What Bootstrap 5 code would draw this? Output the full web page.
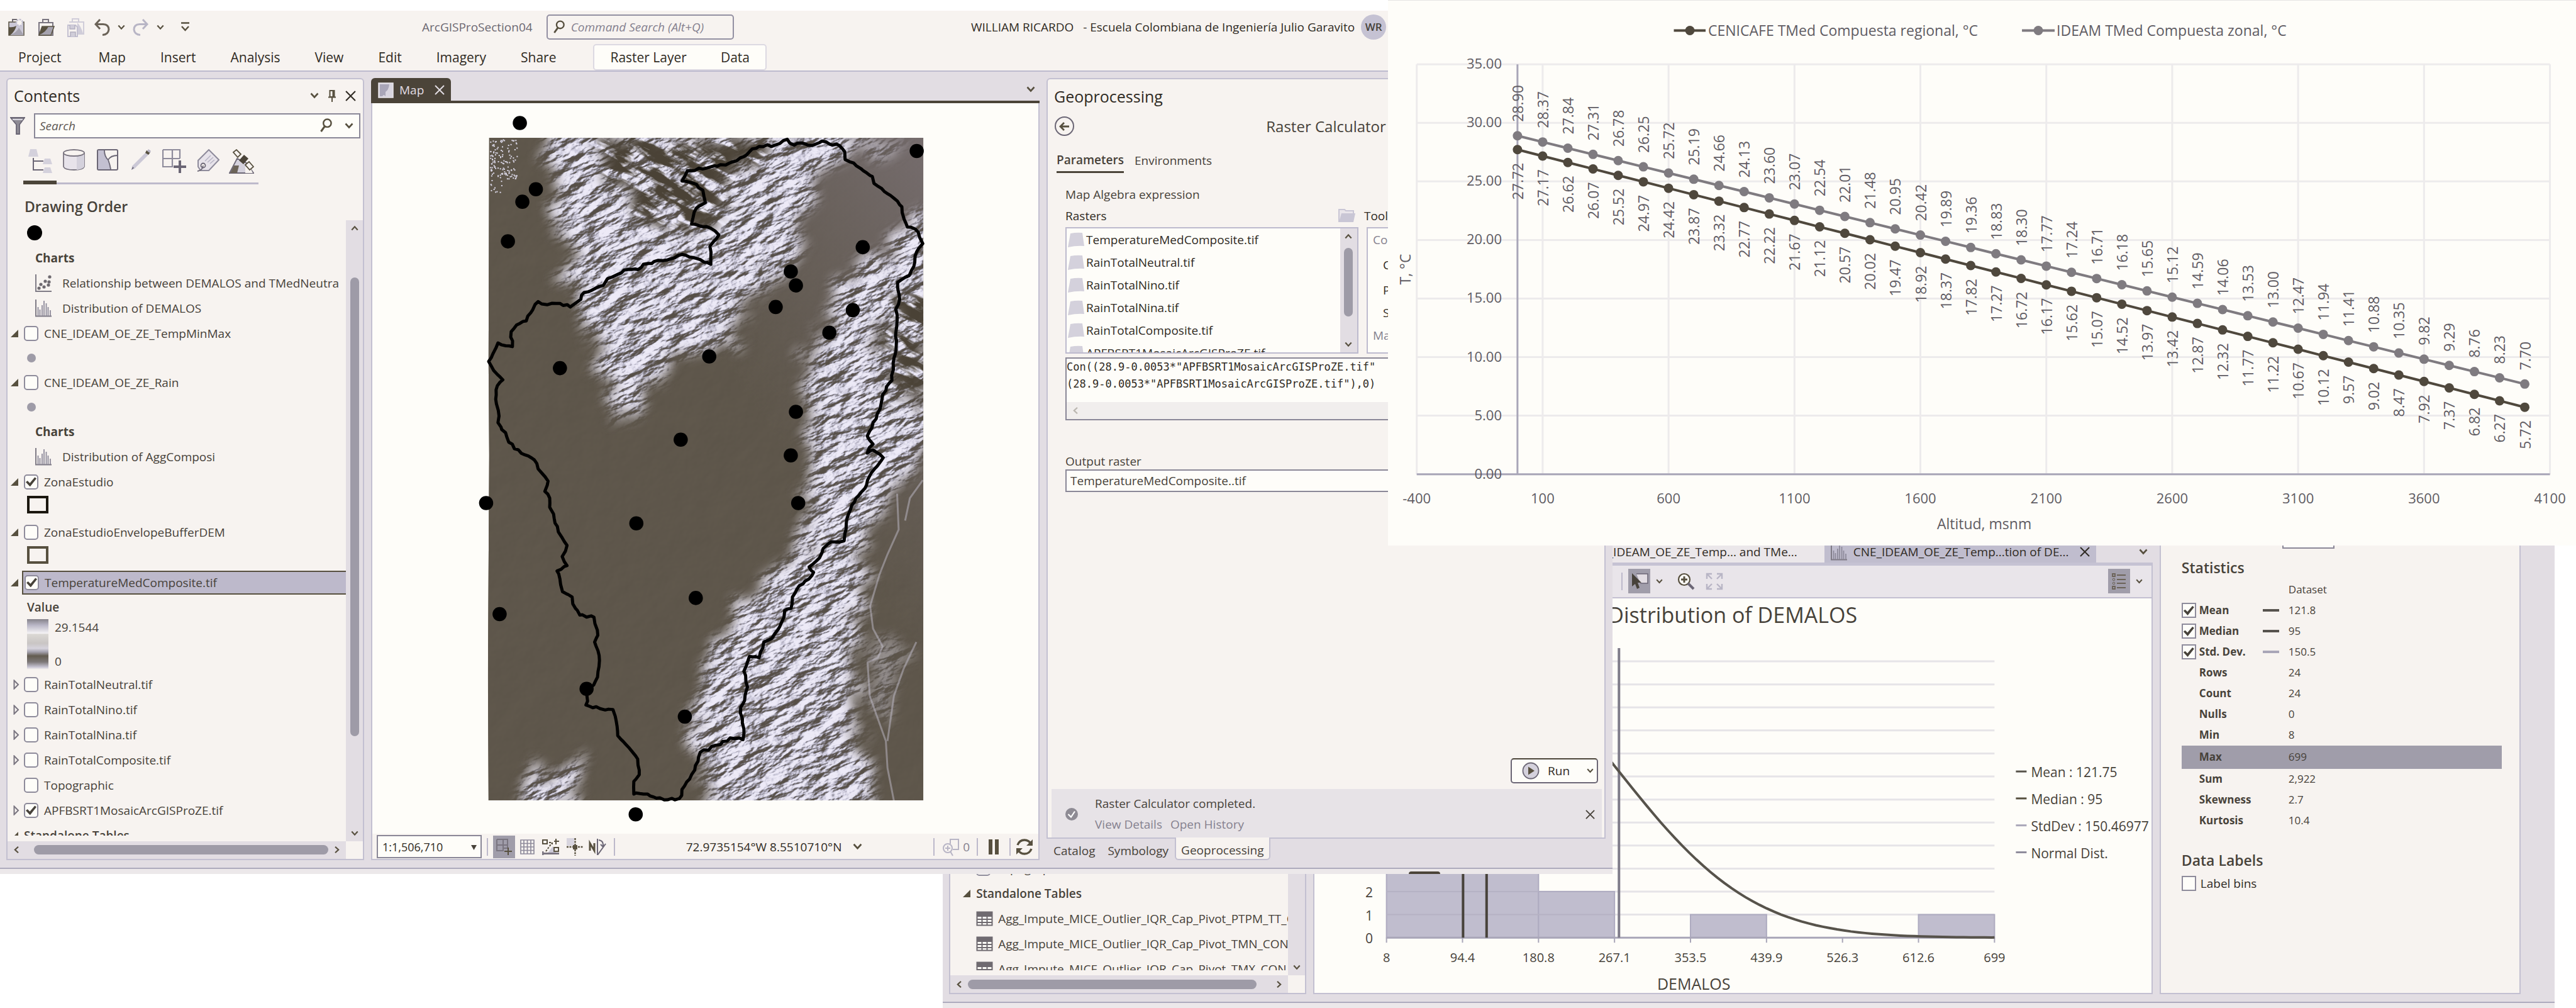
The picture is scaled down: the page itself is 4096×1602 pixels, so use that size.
<!DOCTYPE html>
<html lang="es">
<head>
<meta charset="utf-8">
<meta name="viewport" content="width=device-width, initial-scale=1">
<title>ArcGISProSection04</title>
<link href="https://cdn.jsdelivr.net/npm/bootstrap@5.3.0/dist/css/bootstrap.min.css" rel="stylesheet">
<style>
:root{--ink:#47423a;--ink2:#6c6872;--paper:#fefdf9;--pane:#f7f3f0;--chrome:#e2dde3;--line:#c3c0d1;--bar:#4b4439;--thumb:#9e9ba7;--sel:#bdb9cb}
body{background:#fff;color:var(--ink);font-family:"Open Sans","Noto Sans",sans-serif;font-size:19px;line-height:26px;overflow:hidden}
button,input,select,textarea{font:inherit;color:inherit}
button{background:none;border:0;padding:0}
a{color:inherit;text-decoration:none}
svg{display:block;flex:none}
.desk{position:relative;height:100vh;overflow:hidden}
.win{position:absolute;background:var(--chrome);overflow:hidden}
.win-main{left:0;top:1.06%;width:62.6%;height:85.64%;z-index:2}
.win-back{left:36.6%;top:53.68%;right:.83%;bottom:0;z-index:1}
.win-plot{left:53.88%;right:0;top:0;z-index:3;background:var(--paper);border-top:1px solid #e6e4e4}
.win-foot{height:10px;background:#ece8ea;border-top:2px solid #aeabbd;flex:none}
.head{background:var(--pane);border-bottom:2px solid #bdbace;flex:none}
.titlebar{height:53px}
.qat{width:26.17%;padding-left:13px}
.cmd{width:298px;height:40px;border:2px solid #9390a2;border-radius:5px;padding:0 9px;gap:10px}
.cmd input,.find input{border:0;background:none;outline:0;font-style:italic;min-width:0}
.cmd input::placeholder{color:#85818f;opacity:1}
.find input::placeholder{color:#5f5a55;opacity:1}
.userbox{margin-right:14.04%;color:#302b24}
.avatar{width:40px;height:40px;border-radius:50%;background:#c5c2d3;font-weight:600;font-size:17px;color:var(--ink)}
.ribbon{height:42px;font-size:21px;color:#302b24;padding-left:29px;gap:55px}
.ribbon-ctx{height:42px;margin-left:4px;padding:0 25px;gap:54px;background:var(--paper);border:2px solid #dcd9e2;border-radius:5px}
.work{flex:1 1 0;min-height:0;padding:10px 11px 12px 10px;display:grid;grid-template-columns:minmax(0,569fr) minmax(0,1063fr) minmax(0,889fr);grid-template-rows:minmax(0,1fr);gap:11px}
.pane{background:var(--pane);border:2px solid var(--line);border-radius:6px 6px 0 0;min-height:0}
.pane-title{height:54px;font-size:25px;padding:0 11px 0 10px;color:#302b24}
.find{height:40px;border:2px solid #8a8797;background:var(--paper);padding:0 9px 0 7px}
.modes{margin:14px 0 0 25px;width:374px;height:59px;border-bottom:3px solid var(--sel)}
.modes button{width:54px;height:59px;display:flex;justify-content:center;padding-top:3px;border-bottom:6px solid transparent}
.modes .on{border-color:var(--bar)}
.group-title{font-size:23px;font-weight:600;line-height:34px;margin:18px 0 5px 27px}
.tree{flex:1 1 0;min-width:0;overflow:hidden;margin-bottom:9px;white-space:nowrap}
.trow{height:40px;display:flex;align-items:center;flex:none}
.trow label{display:flex;align-items:center;gap:9px}
.twig{width:26px;flex:none;padding-left:5px}
.lv1{padding-left:31px}.lv2{padding-left:44px}
.lv2 svg{margin-right:17px}
.h38{height:38px}
.pickrow{flex:1;height:38px;margin-left:-3px;padding-left:2px;display:flex;border:2px solid #57503f;border-right:0;background:var(--sel)}
.tick{appearance:none;width:23px;height:24px;margin:0;border:2px solid #8e8b9b;border-radius:5px;background:var(--paper);flex:none;display:grid;place-items:center}
.tick:checked::before{content:"";width:17px;height:15px;background:var(--ink);clip-path:polygon(0 52%,16% 38%,38% 62%,84% 0,100% 14%,40% 100%)}
.tick-sq{border-radius:0}
.dot-lg{width:24px;height:24px;border-radius:50%;background:#000}
.dot-sm{width:14px;height:14px;border-radius:50%;background:var(--thumb)}
.swatch{width:34px;height:28px;border:4px solid #1b170f}
.swatch-b{border-color:#57503f}
.ramp{width:34px;height:80px;margin-right:10px;background:linear-gradient(#85828a,#b9b6c6 12%,#f4f2f4 28%,#dbd8d4 30%,#c9c5c4 48%,#d6d3dc 58%,#a5a2ae 65%,#635c50 73%,#7d7878 85%,#c6c3d2 95%,#f7f3f0)}
.rampbox{height:84px;padding:0 0 4px 31px}
.vbar{width:27px;background:var(--chrome);display:flex;flex-direction:column;align-items:center;flex:none;padding:8px 0}
.vbar i,.hbar i{background:var(--thumb);border-radius:8px}
.vbar i{width:14px}
.hbar{height:28px;background:var(--chrome);display:flex;align-items:center;flex:1;padding:0 8px}
.hbar i{height:15px}
.corner{width:27px;background:var(--pane)}
.doc-tabs{height:40px;border-bottom:4px solid var(--bar)}
.doc-tab{height:40px;width:127px;background:var(--bar);color:#e2dde3;border-radius:6px 6px 0 0;padding:0 10px 1px 11px;gap:9px;margin-bottom:-4px}
.mapview{flex:1 1 0;min-height:0;background:var(--paper);border:2px solid var(--line);border-top:0;display:flex;flex-direction:column}
.mapview>svg{width:100%;flex:1 1 0;min-height:0}
.status{height:40px;background:var(--pane);padding:2px 8px 0 7px;flex:none;gap:8px;color:#302b24}
.scale{width:167px;height:37px;border:2px solid #8a8797;background:var(--paper);font-size:18px;position:relative}
.scale select{appearance:none;border:0;background:none;width:100%;height:100%;padding:0 7px;outline:0}
.scale svg{position:absolute;right:6px;top:13px;pointer-events:none}
.sep{width:2px;height:28px;background:var(--sel);flex:none}
.onbtn{background:#a09daa;width:35px;height:36px;display:grid;place-items:center}
.gp-back{width:31px;height:31px;border:2px solid #6b6675;border-radius:50%;display:grid;place-items:center}
.gp-tabs{height:39px;margin:14px 0 0 14px;gap:17px}
.gp-tabs button{height:39px}
.gp-tabs .on{font-weight:600;border-bottom:3px solid var(--bar)}
.gp-body{padding:18px 10px 0 28px}
.listbox{border:2px solid #bdbace;background:var(--paper);height:201px;overflow:hidden;color:#302b24;white-space:nowrap}
.listbox li{height:36px;display:flex;align-items:center;gap:3px}
.expr{height:100px;border:2px solid #8a8797;margin-top:6px;background:var(--paper)}
.expr textarea{font-family:"DejaVu Sans Mono","Liberation Mono",monospace;font-size:17px;line-height:27px;border:0;background:none;resize:none;outline:0;padding:0;white-space:pre;overflow:hidden;color:#302b24;height:69px}
.expr-bar{height:27px;background:#f1eeed;padding-left:8px}
.outbox{height:36px;border:2px solid #8a8797;background:var(--paper);padding:0 6px;outline:0}
.runbtn{width:139px;height:40px;border:2px solid #6b6675;border-top-color:var(--bar);border-radius:5px;background:var(--paper);padding:0 5px 0 16px;color:#302b24}
.toast-line{height:77px;margin:9px 4px 0 6px;background:#e7e3e7;padding:4px 11px 0 22px}
.quiet{color:#85818f}
.dock-tabs{height:34px;padding-left:1px}
.dock-tabs button{padding:4px 10px 0 10px;height:34px}
.dock-tabs .on{background:var(--pane);border:2px solid var(--line);border-top:0;border-radius:0 0 6px 6px;padding:6px 8px 0;margin-top:-2px;height:36px}
.notch{position:absolute;left:87.35%;bottom:0;width:50px;height:4px;border-radius:5px 5px 0 0;background:var(--bar)}
.back-work{padding:0 54px 12px 10px;flex:1 1 0;min-height:0;display:grid;grid-template-columns:minmax(0,568fr) minmax(0,1334fr) minmax(0,574fr);grid-template-rows:minmax(0,1fr);gap:11px}
.backtree{display:flex;flex-direction:column;justify-content:flex-end;padding-left:15px;margin-bottom:8px}
.backtree .trow:last-child{margin-bottom:-18px}
.views{height:34px;color:#302b24}
.view-tab{height:34px;background:#ebe7ea;padding-right:43px}
.view-on{height:34px;width:432px;background:#c0bdce;padding:0 10px;gap:10px}
.views-end{width:90px}
.chartpane{border:2px solid var(--line);border-top:5px solid #c5c2d3;flex:1 1 0;min-height:0;background:var(--paper)}
.chart-tools{height:52px;background:#e9e5ea;border-bottom:2px solid var(--line);padding:0 14px 0 488px;gap:9px}
.props{border:2px solid var(--line);border-top:0;background:var(--pane);padding:0 28px 0 33px}
.props h2{font-size:23px;font-weight:600;line-height:36px;margin:0}
.cutbtn{display:block;width:83px;height:12px;margin-left:160px;border:2px solid #8a8797;border-top:0;background:var(--paper)}
.facts{width:100%;font-size:17px;line-height:24px}
.facts td,.facts th{height:33px;padding:0;vertical-align:middle}
.facts tbody th{width:129px;font-weight:700}
.facts tbody th>*{margin-left:28px}
.facts tbody th label{margin-left:0;display:flex;align-items:center;gap:5px}
.facts td:nth-child(2){width:41px}
.facts .hit td,.facts .hit th{height:37px;background:#a09daa}
.facts thead th{height:34px;font-weight:400}
.dash{display:block;width:26px;height:4px;background:#57534e}
.dash-b{background:#a9a6b8}
.win-plot>svg{width:100%;height:auto}
.win-plot text{fill:#605c63}
</style>
</head>
<body>
<svg width="0" height="0" class="position-absolute">
  <defs>
    <symbol id="chev" viewBox="0 0 14 10"><path d="M1.500 1.500L7 7.500L12.500 1.500" fill="none" stroke="#57503f" stroke-width="2.600"/></symbol>
    <symbol id="cross" viewBox="0 0 16 16"><path d="M1 1L15 15M15 1L1 15" fill="none" stroke="currentColor" stroke-width="2"/></symbol>
    <symbol id="lens" viewBox="0 0 20 24"><circle cx="12" cy="8" r="6.500" fill="none" stroke="#57503f" stroke-width="2.600"/><path d="M8 13L1.500 22" stroke="#57503f" stroke-width="3.200"/></symbol>
    <symbol id="open" viewBox="0 0 12 12"><path d="M12 0V12H0Z" fill="#57503f"/></symbol>
    <symbol id="shut" viewBox="0 0 10 16"><path d="M1.500 1.500V14.500L8 8Z" fill="none" stroke="#7a7580" stroke-width="2"/></symbol>
    <symbol id="hist" viewBox="0 0 26 28"><path d="M1 0V27M26 26.500H0" stroke="#7f7b86" stroke-width="2" fill="none"/><path d="M4.500 12V26M7.500 16V26M11 9V26M14 2V26M17.500 6V26M20.500 12V26M24 17V26" stroke="#8e8b9b" stroke-width="1.800"/></symbol>
    <symbol id="scat" viewBox="0 0 26 28"><path d="M1 0V27M26 27H0" stroke="#7f7b86" stroke-width="2" fill="none"/><g fill="#6f6a70"><circle cx="6" cy="22" r="2.600"/><circle cx="9" cy="16" r="2.600"/><circle cx="14" cy="20" r="2.600"/><circle cx="16" cy="11" r="2.600"/><circle cx="21" cy="17" r="2.600"/><circle cx="22" cy="12" r="2.600"/><circle cx="23" cy="4" r="2.600"/></g></symbol>
    <symbol id="tbl" viewBox="0 0 27 24"><path d="M1.500 1.500H25.500V22.500H1.500ZM1.500 8H25.500M1.500 13H25.500M1.500 18H25.500M9.500 8V22M17.500 8V22" fill="#fefdf9" stroke="#6f6a70" stroke-width="2"/><path d="M1 1H26V8H1Z" fill="#6f6a70"/></symbol>
    <symbol id="lyr" viewBox="0 0 26 24"><path d="M4 2Q14 0 23 1L26 22Q14 21 0 24Z" fill="#d4d1dc"/></symbol>
  </defs>
</svg>
<main class="desk">

<section class="win win-main d-flex flex-column">
  <header class="head">
    <div class="titlebar d-flex align-items-center">
      <div class="qat d-flex align-items-center">
        <button aria-label="Nuevo"><svg width="26" height="28" viewBox="0 0 26 28"><path d="M1 6V27H25V6Z" fill="#cbc8d6" stroke="#57503f" stroke-width="1.500"/><path d="M7 6V2H14" fill="none" stroke="#6f6a70" stroke-width="2"/><path d="M1 14Q8 15 13 12Q11 21 3 27H1Z" fill="#57503f"/><path d="M3 27Q14 22 17 15L25 27Z" fill="#a5a2ae"/><circle cx="18" cy="7" r="5" fill="#f7f3f0" stroke="#c3c0d1" stroke-width="2.500" stroke-dasharray="3 1.500"/></svg></button>
        <button aria-label="Abrir" style="margin-left:21px"><svg width="27" height="28" viewBox="0 0 27 28"><path d="M2 7H24V27H2ZM8 7V2H17V7" fill="#f7f3f0" stroke="#7a7580" stroke-width="2"/><path d="M7 13H26L21 27H2Z" fill="#a5a2ae" stroke="#57503f" stroke-width="1.500"/><path d="M7 14L17 13Q13 22 3 26Z" fill="#57503f"/></svg></button>
        <button aria-label="Guardar" style="margin-left:20px"><svg width="27" height="31" viewBox="0 0 27 31"><path d="M3 7H26V26H14M8 7V2H18V7" fill="none" stroke="#d0cdd9" stroke-width="2"/><path d="M16 8Q22 14 25 25H16Z" fill="#d0cdd9"/><path d="M1 12H13L16 15V30H1Z" fill="#f7f3f0" stroke="#c3c0d1" stroke-width="2"/><path d="M4 12V18H12V12M5 30V23H13V30" fill="#d0cdd9" stroke="#b3b0c0" stroke-width="1.500"/></svg></button>
        <button aria-label="Deshacer" style="margin-left:16px"><svg width="25" height="27" viewBox="0 0 25 27"><path d="M9 1L2 8.500L9 16M2 8.500H14Q23 9 23 17Q22 25 13 25.500" fill="none" stroke="#6b6358" stroke-width="3"/></svg></button>
        <svg width="12" height="9" style="margin-left:12px"><use href="#chev"/></svg>
        <button aria-label="Rehacer" style="margin-left:12px"><svg width="25" height="27" viewBox="0 0 25 27"><path d="M16 1L23 8.500L16 16M23 8.500H11Q2 9 2 17Q3 25 12 25.500" fill="none" stroke="#b8b5c5" stroke-width="3"/></svg></button>
        <svg width="12" height="9" style="margin-left:13px"><use href="#chev"/></svg>
        <svg width="15" height="16" viewBox="0 0 15 16" style="margin-left:26px"><path d="M1 1.500H14M2 7L7.500 13L13 7" fill="none" stroke="#57503f" stroke-width="2.500"/></svg>
      </div>
      <span style="color:#6c6872">ArcGISProSection04</span>
      <div class="cmd d-flex align-items-center" style="margin-left:22px">
        <svg width="18" height="22"><use href="#lens"/></svg>
        <input type="text" aria-label="Command Search" placeholder="Command Search (Alt+Q)" class="flex-grow-1 p-0">
      </div>
      <div class="userbox d-flex align-items-center ms-auto">
        <span>WILLIAM RICARDO&nbsp;&nbsp; - Escuela Colombiana de Ingeniería Julio Garavito</span>
        <span class="avatar d-flex align-items-center justify-content-center" style="margin-left:10px">WR</span>
      </div>
    </div>
    <nav class="ribbon d-flex align-items-center">
      <a href="#" style="margin-right:4px">Project</a><a href="#">Map</a><a href="#">Insert</a><a href="#">Analysis</a><a href="#">View</a><a href="#">Edit</a><a href="#">Imagery</a><a href="#">Share</a>
      <div class="ribbon-ctx d-flex align-items-center"><a href="#">Raster Layer</a><a href="#">Data</a></div>
    </nav>
  </header>

  <div class="work">
    <aside class="pane d-flex flex-column">
      <div class="pane-title d-flex align-items-center">Contents
        <svg class="ms-auto" width="14" height="10"><use href="#chev"/></svg>
        <svg width="12" height="19" viewBox="0 0 12 19" style="margin:0 15px"><path d="M2.500 1H9.500V11H2.500ZM0 11.500H12M6 12V19" fill="none" stroke="#57503f" stroke-width="2"/><path d="M6.500 1H10V11H6.500Z" fill="#57503f"/></svg>
        <button aria-label="Cerrar"><svg width="17" height="17"><use href="#cross"/></svg></button>
      </div>
      <div class="d-flex align-items-center" style="padding:1px 4px 0 4px">
        <svg width="24" height="28" viewBox="0 0 24 28" style="margin-right:14px"><path d="M1 1H23L15 12V27H10V12Z" fill="#8e8b94" stroke="#6b6675" stroke-width="1.800"/><path d="M4 4H20" stroke="#d8d5df" stroke-width="2"/></svg>
        <div class="find d-flex align-items-center flex-grow-1">
          <input type="text" aria-label="Search" placeholder="Search" class="flex-grow-1 p-0">
          <svg width="19" height="23"><use href="#lens"/></svg>
          <svg width="14" height="10" style="margin-left:20px"><use href="#chev"/></svg>
        </div>
      </div>
      <div class="modes d-flex">
        <button class="on" aria-label="Orden de dibujo"><svg width="38" height="38" viewBox="0 0 38 38"><path d="M8 14V33H24M8 19H24" fill="none" stroke="#6b6675" stroke-width="2"/><path d="M3 0H13L16 12H0ZM26 15H35L38 24H23ZM26 29H35L38 38H23Z" fill="#d4d1dc"/></svg></button>
        <button aria-label="Origen de datos"><svg width="35" height="34" viewBox="0 0 35 34"><path d="M1 6V28Q3 33 17.500 33Q32 33 34 28V6" fill="#e7e3ea" stroke="#7a7580" stroke-width="1.800"/><path d="M22 11L34 7V28Q31 32 22 33Z" fill="#d4d1dc"/><ellipse cx="17.500" cy="6" rx="16.500" ry="5" fill="#f7f3f0" stroke="#7a7580" stroke-width="1.800"/></svg></button>
        <button aria-label="Selección"><svg width="34" height="34" viewBox="0 0 34 34"><rect x="1" y="1" width="32" height="32" rx="2" fill="#f7f3f0" stroke="#6b6675" stroke-width="2"/><path d="M2 2H12Q12 12 18 17Q21 25 22 32H2Z" fill="#c3c0d1"/><path d="M12 2Q12 12 18 17Q21 25 22 32M18 17Q22 10 33 10" fill="none" stroke="#6b6675" stroke-width="1.800"/></svg></button>
        <button aria-label="Edición"><svg width="32" height="34" viewBox="0 0 32 34"><path d="M2 27L25 4L30 7L6 31L1 33Z" fill="#cbc8d6"/><path d="M25 2L31 5L28 9L23 6Z" fill="#57503f"/><path d="M28 0L32 3L30 6L26 3Z" fill="#b8b5c5"/><path d="M1 33L5 30L3 28Z" fill="#6b6675"/></svg></button>
        <button aria-label="Alineación"><svg width="38" height="38" viewBox="0 0 38 38"><path d="M1 1H28V15M1 1V28H16V1M1 15H28" fill="none" stroke="#8e8b9b" stroke-width="2.200"/><path d="M28 18V38M18 28H38" stroke="#6b6675" stroke-width="4"/></svg></button>
        <button aria-label="Etiquetas"><svg width="36" height="36" viewBox="0 0 36 36"><path d="M19 1L35 17L19 34H6L2 28V18Z" fill="#e7e3ea" stroke="#8e8b9b" stroke-width="2"/><path d="M13 19L22 10M17 21L26 13M21 23L28 17" stroke="#b8b5c5" stroke-width="1.500"/><circle cx="10" cy="26" r="3.500" fill="#f7f3f0" stroke="#6b6675" stroke-width="1.800"/><path d="M10 26Q9 34 1 35" fill="none" stroke="#6b6675" stroke-width="1.800"/></svg></button>
        <button aria-label="Percepción"><svg width="40" height="39" viewBox="0 0 40 39"><path d="M1 38L13 15L28 22L39 38Z" fill="#d4d1dc" stroke="#6b6675" stroke-width="1.800"/><path d="M2 38L8 26H16L13 38Z" fill="#6b6358"/><path d="M26 38V28H33L38 38Z" fill="#f7f3f0"/><path d="M16 18L24 9L31 15L23 24Z" fill="#4b4439"/><path d="M7 5L12 1L19 8L14 13ZM26 25L32 20L39 28L33 33Z" fill="#f7f3f0" stroke="#57503f" stroke-width="1.800"/></svg></button>
      </div>
      <h2 class="group-title">Drawing Order</h2>
      <div class="d-flex flex-grow-1" style="min-height:0">
        <div class="tree">
          <div class="trow lv1"><span class="dot-lg"></span></div>
          <div class="trow lv2 fw-bold">Charts</div>
          <div class="trow lv2"><svg width="26" height="28"><use href="#scat"/></svg>Relationship between DEMALOS and TMedNeutra</div>
          <div class="trow lv2"><svg width="26" height="28"><use href="#hist"/></svg>Distribution of DEMALOS</div>
          <div class="trow"><span class="twig"><svg width="12" height="12"><use href="#open"/></svg></span><label><input class="tick" type="checkbox">CNE_IDEAM_OE_ZE_TempMinMax</label></div>
          <div class="trow h38 lv1"><span class="dot-sm"></span></div>
          <div class="trow"><span class="twig"><svg width="12" height="12"><use href="#open"/></svg></span><label><input class="tick" type="checkbox">CNE_IDEAM_OE_ZE_Rain</label></div>
          <div class="trow h38 lv1"><span class="dot-sm"></span></div>
          <div class="trow lv2 fw-bold">Charts</div>
          <div class="trow lv2"><svg width="26" height="28"><use href="#hist"/></svg>Distribution of AggComposi</div>
          <div class="trow"><span class="twig"><svg width="12" height="12"><use href="#open"/></svg></span><label><input class="tick" type="checkbox" checked>ZonaEstudio</label></div>
          <div class="trow lv1 pb-2"><span class="swatch"></span></div>
          <div class="trow"><span class="twig"><svg width="12" height="12"><use href="#open"/></svg></span><label><input class="tick" type="checkbox">ZonaEstudioEnvelopeBufferDEM</label></div>
          <div class="trow lv1 pb-2"><span class="swatch swatch-b"></span></div>
          <div class="trow"><span class="twig"><svg width="12" height="12"><use href="#open"/></svg></span><div class="pickrow"><label><input class="tick" type="checkbox" checked>TemperatureMedComposite.tif</label></div></div>
          <div class="trow h38 lv1 fw-semibold">Value</div>
          <div class="rampbox d-flex"><div class="ramp"></div><div class="d-flex flex-column justify-content-between"><span>29.1544</span><span>0</span></div></div>
          <div class="trow"><span class="twig"><svg class="ms-1" width="10" height="16"><use href="#shut"/></svg></span><label><input class="tick" type="checkbox">RainTotalNeutral.tif</label></div>
          <div class="trow"><span class="twig"><svg class="ms-1" width="10" height="16"><use href="#shut"/></svg></span><label><input class="tick" type="checkbox">RainTotalNino.tif</label></div>
          <div class="trow"><span class="twig"><svg class="ms-1" width="10" height="16"><use href="#shut"/></svg></span><label><input class="tick" type="checkbox">RainTotalNina.tif</label></div>
          <div class="trow"><span class="twig"><svg class="ms-1" width="10" height="16"><use href="#shut"/></svg></span><label><input class="tick" type="checkbox">RainTotalComposite.tif</label></div>
          <div class="trow"><span class="twig"></span><label><input class="tick" type="checkbox">Topographic</label></div>
          <div class="trow"><span class="twig"><svg class="ms-1" width="10" height="16"><use href="#shut"/></svg></span><label><input class="tick" type="checkbox" checked>APFBSRT1MosaicArcGISProZE.tif</label></div>
          <div class="trow fw-semibold"><span class="twig"><svg width="12" height="12"><use href="#open"/></svg></span>Standalone Tables</div>
        </div>
        <div class="vbar"><svg width="12" height="9" style="transform:rotate(180deg)"><use href="#chev"/></svg><span style="flex:74"></span><i style="flex:729"></i><span style="flex:150"></span><svg width="12" height="9"><use href="#chev"/></svg></div>
      </div>
      <div class="d-flex"><div class="hbar"><svg width="12" height="9" style="transform:rotate(90deg)"><use href="#chev"/></svg><span style="flex:22"></span><i style="flex:468"></i><span style="flex:8"></span><svg width="12" height="9" style="transform:rotate(-90deg)"><use href="#chev"/></svg></div><div class="corner"></div></div>
    </aside>

    <div class="d-flex flex-column">
      <div class="doc-tabs d-flex align-items-center flex-shrink-0">
        <div class="doc-tab d-flex align-items-center"><svg width="25" height="25" viewBox="0 0 25 25"><rect x="1" y="1" width="23" height="23" fill="#d8d5df" stroke="#e9e5ea" stroke-width="1.500"/><path d="M3 3H18Q17 12 12 15V22Q9 18 7 22H3Z" fill="#a9a6b8"/></svg>Map<button class="ms-auto" aria-label="Cerrar mapa"><svg width="16" height="16"><use href="#cross"/></svg></button></div>
        <svg class="ms-auto" width="14" height="10" style="margin-right:7px"><use href="#chev"/></svg>
      </div>
      <div class="mapview">
        <svg id="map" viewBox="0 0 1060 1162" preserveAspectRatio="xMidYMid meet">
          <defs>
            <clipPath id="mapclip"><path d="M186 55H877V1109H185L184 912L186 560L185 410Z"/></clipPath>
            <filter id="relief" x="0" y="0" width="100%" height="100%" color-interpolation-filters="sRGB">
              <feTurbulence type="fractalNoise" baseFrequency=".022 .055" numOctaves="7" seed="14"/>
              <feDiffuseLighting surfaceScale="14" diffuseConstant="1.100" lighting-color="#fff"><feDistantLight azimuth="235" elevation="43"/></feDiffuseLighting>
              <feComponentTransfer><feFuncR type="table" tableValues=".34 .45 .6 .8 .93"/><feFuncG type="table" tableValues=".31 .43 .59 .79 .92"/><feFuncB type="table" tableValues=".28 .44 .64 .86 .97"/></feComponentTransfer>
            </filter>
            <filter id="ragged" x="-10%" y="-10%" width="120%" height="120%">
              <feTurbulence type="fractalNoise" baseFrequency=".03" numOctaves="5" seed="3" result="n"/>
              <feDisplacementMap in="SourceGraphic" in2="n" scale="80" xChannelSelector="R" yChannelSelector="G"/>
              <feGaussianBlur stdDeviation="9"/>
            </filter>
            <filter id="streak" x="0" y="0" width="100%" height="100%" color-interpolation-filters="sRGB">
              <feTurbulence type="fractalNoise" baseFrequency=".016 .07" numOctaves="6" seed="8"/>
              <feColorMatrix values="0 0 0 0 .29  0 0 0 0 .26  0 0 0 0 .21  6 0 0 0 -2.300"/>
            </filter>
            <filter id="plain" x="0" y="0" width="100%" height="100%" color-interpolation-filters="sRGB">
              <feTurbulence type="fractalNoise" baseFrequency=".02" numOctaves="4" seed="5"/>
              <feDiffuseLighting surfaceScale=".3" lighting-color="#857a6a"><feDistantLight azimuth="225" elevation="45"/></feDiffuseLighting>
            </filter>
            <mask id="m-high"><g id="high" fill="#fff" filter="url(#ragged)"></g></mask>
            <mask id="m-dark"><g id="dark" fill="#fff" filter="url(#ragged)"></g></mask>
            <linearGradient id="haze" x1="0" y1="1" x2="1" y2="0"><stop offset=".6" stop-color="#6d6562" stop-opacity="0"/><stop offset="1" stop-color="#766d6e"/></linearGradient>
          </defs>
          <g clip-path="url(#mapclip)">
            <rect x="180" y="50" width="700" height="1062" fill="#5e564b"/>
            <rect x="180" y="50" width="700" height="1062" filter="url(#plain)"/>
            <rect x="180" y="50" width="700" height="1062" fill="url(#haze)"/>
            <g mask="url(#m-high)"><rect x="-120" y="-50" width="1300" height="1300" filter="url(#relief)" transform="rotate(-22 530 580)"/></g>
            <g mask="url(#m-dark)"><rect x="-120" y="-50" width="1300" height="1300" filter="url(#streak)" transform="rotate(28 530 580)"/></g>
            <g id="ridges" fill="none" stroke="#c9c6d6" stroke-width="3" opacity=".45" stroke-linejoin="round"></g>
            <g id="specks" fill="#d8d5e4"></g>
          </g>
          <path id="edge" fill="none" stroke="#000" stroke-width="5" stroke-linejoin="round"/>
          <g id="stations"></g>
        </svg>
        <div class="status d-flex align-items-center">
          <div class="scale"><select aria-label="Escala"><option>1:1,506,710</option></select><svg width="9" height="9" viewBox="0 0 9 9"><path d="M0 1H9L4.500 9Z" fill="#47423a"/></svg></div>
          <span class="sep"></span>
          <button class="onbtn" aria-label="Restricciones"><svg width="28" height="28" viewBox="0 0 28 28"><path d="M2 2H19V16H12M2 2V20H12V2M2 11H19" fill="none" stroke="#7a7580" stroke-width="2"/><path d="M20 15V27M14 21H26" stroke="#57503f" stroke-width="2"/></svg></button>
          <svg width="23" height="24" viewBox="0 0 23 24"><path d="M1 1H22V23H1ZM1 6.500H22M1 12H22M1 17.500H22M6 1V23M11.500 1V23M17 1V23" fill="none" stroke="#8e8b9b" stroke-width="1.700"/></svg>
          <svg class="ms-1" width="27" height="26" viewBox="0 0 27 26"><path d="M8 24L17 12L23 24Z" fill="#cbc8d6"/><path d="M1 2H8V8H1ZM19 14H26V20H19ZM19 4H27M22 0V9" fill="none" stroke="#57503f" stroke-width="2"/><path d="M6 20L16 6M11 6H16V11" fill="none" stroke="#57503f" stroke-width="2" stroke-dasharray="3 2"/><path d="M1 20V26M1 23.500H27" stroke="#7a7580" stroke-width="3"/></svg>
          <svg class="ms-1" width="27" height="28" viewBox="0 0 27 28"><rect x="0" y="0" width="12" height="12" fill="#d8d5df"/><path d="M13.500 0V28M0 14H27" stroke="#57503f" stroke-width="2.400" stroke-dasharray="3 1.500"/><rect x="10" y="11" width="7" height="7" fill="#57503f"/></svg>
          <svg width="28" height="26" viewBox="0 0 28 26"><path d="M2 19V7L9 19V7" fill="none" stroke="#57503f" stroke-width="3"/><path d="M14 0V26L27 8M16 2Q24 3 23 12M19 9L23 13L27 8" fill="none" stroke="#6b6675" stroke-width="2"/></svg>
          <span class="sep ms-1"></span>
          <div class="mx-auto d-flex align-items-center"><span>72.9735154°W 8.5510710°N</span><svg width="15" height="11" style="margin-left:18px"><use href="#chev"/></svg></div>
          <span class="sep"></span>
          <div class="d-flex align-items-center quiet" style="margin:0 3px;gap:6px"><svg width="28" height="30" viewBox="0 0 28 30"><circle cx="10" cy="17" r="7" fill="none" stroke="#b8b5c5" stroke-width="2"/><path d="M10 13V21M6 17H14M14 22L18 29M14 10V3H27V19H18" fill="none" stroke="#b8b5c5" stroke-width="2"/></svg><span>0</span></div>
          <span class="sep"></span>
          <svg class="mx-1" width="26" height="26" viewBox="0 0 26 26"><path d="M8 1V25M18 1V25" stroke="#57503f" stroke-width="6"/></svg>
          <span class="sep"></span>
          <svg width="28" height="28" viewBox="0 0 28 28"><path d="M3 11Q6 3 14 3Q21 3 25 10M25 17Q22 25 14 25Q7 25 3 18" fill="none" stroke="#57503f" stroke-width="3.500"/><path d="M27 2V12H17ZM1 26V16H11Z" fill="#57503f"/></svg>
        </div>
      </div>
    </div>

    <div class="d-flex flex-column">
      <section class="pane d-flex flex-column flex-grow-1">
        <div class="pane-title d-flex align-items-center flex-shrink-0">Geoprocessing</div>
        <div class="position-relative d-flex align-items-center justify-content-center" style="height:42px;font-size:24px">
          <button class="gp-back position-absolute" style="left:11px" aria-label="Atrás"><svg width="17" height="14" viewBox="0 0 17 14"><path d="M16 7H2M8 1L2 7L8 13" fill="none" stroke="#57503f" stroke-width="2.800"/></svg></button>
          Raster Calculator
        </div>
        <div class="gp-tabs d-flex"><button class="on">Parameters</button><button>Environments</button></div>
        <div class="gp-body d-flex flex-column">
          <div style="height:32px" class="d-flex align-items-center">Map Algebra expression</div>
          <div class="d-flex" style="gap:13px;color:#302b24">
            <div style="flex:0 0 55%">
              <div class="d-flex align-items-center justify-content-between" style="height:36px">Rasters <svg width="28" height="23" viewBox="0 0 28 23" class="me-1"><path d="M1 22V2H10L12 4H24V8" fill="#e9e5ea" stroke="#c9c6d5" stroke-width="2"/><path d="M1 22L5 8H27L24 22Z" fill="#c9c6d5"/></svg></div>
              <div class="listbox d-flex">
                <ul class="list-unstyled m-0 flex-grow-1" style="padding-left:2px">
                  <li><svg width="26" height="24"><use href="#lyr"/></svg>TemperatureMedComposite.tif</li>
                  <li><svg width="26" height="24"><use href="#lyr"/></svg>RainTotalNeutral.tif</li>
                  <li><svg width="26" height="24"><use href="#lyr"/></svg>RainTotalNino.tif</li>
                  <li><svg width="26" height="24"><use href="#lyr"/></svg>RainTotalNina.tif</li>
                  <li><svg width="26" height="24"><use href="#lyr"/></svg>RainTotalComposite.tif</li>
                  <li><svg width="26" height="24"><use href="#lyr"/></svg>APFBSRT1MosaicArcGISProZE.tif</li>
                </ul>
                <div class="vbar"><svg width="12" height="9" style="transform:rotate(180deg)"><use href="#chev"/></svg><span style="flex:14"></span><i style="flex:110"></i><span style="flex:40"></span><svg width="12" height="9"><use href="#chev"/></svg></div>
              </div>
            </div>
            <div class="flex-grow-1">
              <div class="d-flex align-items-center" style="height:36px;margin-left:-4px">Tools</div>
              <div class="listbox">
                <ul class="list-unstyled m-0 px-2">
                  <li class="quiet">Conditional</li><li class="px-3 my-1">Con</li><li class="px-3">Pick</li><li class="px-3">Set Null</li><li class="quiet">Math</li>
                </ul>
              </div>
            </div>
          </div>
          <div class="expr d-flex flex-column"><textarea aria-label="Expression" spellcheck="false">Con((28.9-0.0053*"APFBSRT1MosaicArcGISProZE.tif"
(28.9-0.0053*"APFBSRT1MosaicArcGISProZE.tif"),0)</textarea><div class="expr-bar d-flex align-items-center"><svg width="12" height="9" style="transform:rotate(90deg);opacity:.35"><use href="#chev"/></svg></div></div>
          <label for="out" style="margin-top:52px">Output raster</label>
          <input id="out" class="outbox" type="text" value="TemperatureMedComposite..tif">
        </div>
        <button class="runbtn d-flex align-items-center mt-auto ms-auto" style="margin-right:10px"><svg width="28" height="28" viewBox="0 0 28 28"><circle cx="14" cy="14" r="12.500" fill="#d4d1dc" stroke="#6b6675" stroke-width="1.800"/><path d="M10 7.500L20 14L10 20.500Z" fill="#57503f"/></svg><span style="margin-left:13px">Run</span><svg class="ms-auto" width="11" height="8"><use href="#chev"/></svg></button>
        <div class="toast-line d-flex align-items-center">
          <svg width="20" height="20" viewBox="0 0 20 20"><circle cx="10" cy="10" r="10" fill="#8e8b94"/><path d="M4.500 10L9 14.500L15 5.500" fill="none" stroke="#fff" stroke-width="2.200"/></svg>
          <div style="margin-left:27px;line-height:33px">Raster Calculator completed.<div class="quiet d-flex" style="gap:13px"><a href="#">View Details</a><a href="#">Open History</a></div></div>
          <button class="ms-auto" aria-label="Descartar"><svg width="15" height="15"><use href="#cross"/></svg></button>
        </div>
      </section>
      <div class="dock-tabs d-flex flex-shrink-0"><button>Catalog</button><button>Symbology</button><button class="on">Geoprocessing</button></div>
    </div>
  </div>
  <div class="win-foot"></div>
  <span class="notch"></span>
</section>

<section class="win win-back d-flex flex-column">
  <div class="back-work">
    <aside class="pane d-flex flex-column">
      <div class="d-flex flex-grow-1" style="min-height:0">
        <div class="tree backtree">
          <div class="trow"><span class="twig"></span><label><input class="tick" type="checkbox">Topographic</label></div>
          <div class="trow fw-semibold"><span class="twig"><svg width="12" height="12"><use href="#open"/></svg></span>Standalone Tables</div>
          <div class="trow"><span class="twig"></span><svg class="me-2" width="27" height="24"><use href="#tbl"/></svg>Agg_Impute_MICE_Outlier_IQR_Cap_Pivot_PTPM_TT_CON</div>
          <div class="trow"><span class="twig"></span><svg class="me-2" width="27" height="24"><use href="#tbl"/></svg>Agg_Impute_MICE_Outlier_IQR_Cap_Pivot_TMN_CON</div>
          <div class="trow"><span class="twig"></span><svg class="me-2" width="27" height="24"><use href="#tbl"/></svg>Agg_Impute_MICE_Outlier_IQR_Cap_Pivot_TMX_CON</div>
        </div>
        <div class="vbar"><span class="flex-grow-1"></span><svg width="12" height="9"><use href="#chev"/></svg></div>
      </div>
      <div class="d-flex"><div class="hbar"><svg width="12" height="9" style="transform:rotate(90deg)"><use href="#chev"/></svg><span style="flex:8"></span><i style="flex:458"></i><span style="flex:30"></span><svg width="12" height="9" style="transform:rotate(-90deg)"><use href="#chev"/></svg></div><div class="corner"></div></div>
    </aside>
    <div class="d-flex flex-column">
      <div class="views d-flex align-items-center justify-content-end flex-shrink-0">
        <div class="view-tab d-flex align-items-center">CNE_IDEAM_OE_ZE_Temp... and TMe...</div>
        <div class="view-on d-flex align-items-center"><svg width="26" height="28"><use href="#hist"/></svg>CNE_IDEAM_OE_ZE_Temp...tion of DE...<svg class="ms-auto" width="16" height="16"><use href="#cross"/></svg></div>
        <div class="views-end d-flex justify-content-end pe-1"><svg width="14" height="10" class="me-1"><use href="#chev"/></svg></div>
      </div>
      <div class="chartpane">
        <div class="chart-tools d-flex align-items-center">
          <span class="sep"></span>
          <button class="onbtn" style="height:39px" aria-label="Seleccionar"><svg width="28" height="28" viewBox="0 0 28 28"><path d="M9 2H27V17H15" fill="#e2dde3" stroke="#6b6675" stroke-width="1.500"/><path d="M2 1L17 16H11L14 24L10 26L7 18L2 22Z" fill="#47423a"/></svg></button>
          <svg width="11" height="8"><use href="#chev"/></svg>
          <svg style="margin-left:14px" width="28" height="28" viewBox="0 0 28 28"><circle cx="11" cy="11" r="9" fill="#fefdf9" stroke="#57503f" stroke-width="2.200"/><path d="M11 6V16M6 11H16" stroke="#57503f" stroke-width="3"/><path d="M17 17L26 26" stroke="#6b6675" stroke-width="4"/></svg>
          <svg class="ms-2" width="28" height="28" viewBox="0 0 28 28"><path d="M10 2H2V10M2 2L10 10M18 2H26V10M26 2L18 10M10 26H2V18M2 26L10 18M18 26H26V18M26 26L18 18" fill="none" stroke="#b8b5c5" stroke-width="2.400"/></svg>
          <button class="onbtn ms-auto" style="height:39px" aria-label="Leyenda"><svg width="22" height="28" viewBox="0 0 22 28"><path d="M8 4H22M8 11H22M8 17H22M8 24H22M1 2H5V6H1ZM1 22H5V26H1Z" stroke="#6b6358" stroke-width="1.800" fill="none"/><circle cx="3" cy="11" r="1.800" fill="none" stroke="#6b6358"/><circle cx="3" cy="17" r="1.800" fill="none" stroke="#6b6358"/></svg></button>
          <svg width="11" height="8"><use href="#chev"/></svg>
        </div>
        <svg id="histo" viewBox="0 0 1330 627" width="100%"></svg>
      </div>
    </div>
    <aside class="props">
      <button class="cutbtn" aria-label="Opciones"></button>
      <h2 style="margin-top:12px">Statistics</h2>
      <table class="facts">
        <thead><tr><th></th><th></th><th>Dataset</th></tr></thead>
        <tbody>
          <tr><th><label><input class="tick tick-sq" type="checkbox" checked>Mean</label></th><td><span class="dash"></span></td><td>121.8</td></tr>
          <tr><th><label><input class="tick tick-sq" type="checkbox" checked>Median</label></th><td><span class="dash"></span></td><td>95</td></tr>
          <tr><th><label><input class="tick tick-sq" type="checkbox" checked>Std. Dev.</label></th><td><span class="dash dash-b"></span></td><td>150.5</td></tr>
          <tr><th><span>Rows</span></th><td></td><td>24</td></tr>
          <tr><th><span>Count</span></th><td></td><td>24</td></tr>
          <tr><th><span>Nulls</span></th><td></td><td>0</td></tr>
          <tr><th><span>Min</span></th><td></td><td>8</td></tr>
          <tr class="hit"><th><span>Max</span></th><td></td><td>699</td></tr>
          <tr><th><span>Sum</span></th><td></td><td>2,922</td></tr>
          <tr><th><span>Skewness</span></th><td></td><td>2.7</td></tr>
          <tr><th><span>Kurtosis</span></th><td></td><td>10.4</td></tr>
        </tbody>
      </table>
      <h2 style="margin-top:28px">Data Labels</h2>
      <label class="d-flex align-items-center" style="margin-top:6px;gap:7px;color:#302b24"><input class="tick tick-sq" type="checkbox">Label bins</label>
    </aside>
  </div>
  <div class="win-foot"></div>
</section>

<section class="win win-plot"><svg id="plot" viewBox="0 0 1889 866"></svg></section>
</main>

<script src="https://cdn.jsdelivr.net/npm/bootstrap@5.3.0/dist/js/bootstrap.bundle.min.js"></script>
<script>
const $=id=>document.getElementById(id);
const txt=(x,y,s,o={})=>`<text x="${x}" y="${y}" font-size="${o.size||22}" text-anchor="${o.a||'middle'}" ${o.r?`transform="rotate(-90 ${x} ${y})"`:''}>${s}</text>`;
let seed=7;const rnd=()=>(seed=(seed*16807)%2147483647)/2147483647;

/* temperature against altitude */
(function(){
  const X=v=>45.7+(v+400)*.4004,Y=t=>752.6-t*18.61;let h='';
  for(let t=0;t<=35;t+=5)h+=`<path d="M45.7 ${Y(t)}H1847.500" stroke="#edebec" stroke-width="3"/>`;
  for(let v=-400;v<=4100;v+=500)h+=`<path d="M${X(v)} ${Y(35)}V${Y(0)}" stroke="#edebec" stroke-width="3"/>`+txt(X(v),799,v);
  h+=`<path d="M45.7 ${Y(0)}H1847.500M${X(0)} ${Y(35)}V${Y(0)}" stroke="#a9a6b8" stroke-width="3" fill="none"/>`;
  for(let t=0;t<=35;t+=5)h+=txt(181,Y(t)+7,t.toFixed(2),{a:'end'});
  for(const [a,b,c,up] of [[28.9,.0053,'#7f7b80',1],[27.72,.0055,'#4f483d',0]]){
    let d='',m='';
    for(let v=0;v<=4000;v+=100){const t=a-b*v,x=X(v),y=Y(t);d+=(d?'L':'M')+x.toFixed(1)+' '+y.toFixed(1);
      m+=`<circle cx="${x}" cy="${y}" r="7.500" fill="${c}"/>`+txt(x+9,up?y-22:y+21,t.toFixed(2),{a:up?'start':'end',r:1,size:23});}
    h+=`<path d="${d}" fill="none" stroke="${c}" stroke-width="4"/>`+m;
  }
  h+=`<path d="M454.500 47.500H505" stroke="#4f483d" stroke-width="4"/><circle cx="480" cy="47.500" r="7.500" fill="#4f483d"/>`+txt(509,56,'CENICAFE TMed Compuesta regional, °C',{size:23,a:'start'});
  h+=`<path d="M1008 47.500H1060" stroke="#7f7b80" stroke-width="4"/><circle cx="1034" cy="47.500" r="7.500" fill="#7f7b80"/>`+txt(1063,56,'IDEAM TMed Compuesta zonal, °C',{size:23,a:'start'});
  h+=txt(948,840,'Altitud, msnm',{size:23})+txt(36,427,'T, °C',{size:23,r:1});
  $('plot').innerHTML=h;
})();

/* elevation histogram */
(function(){
  const X=i=>114.6+i*120.8,Y=n=>539-n*36.58,V=v=>114.6+(v-8)/691*966.4;let h='';
  for(let n=1;n<=12;n++)h+=`<path d="M114.6 ${Y(n)}H1081" stroke="#e6e4e8" stroke-width="3"/>`;
  for(const [i,n,w] of [[0,5,2],[2,2,1],[4,1,1],[7,1,1]])h+=`<rect x="${X(i)}" y="${Y(n)}" width="${120.8*w}" height="${36.58*n}" fill="#c0bdce" stroke="#aeabc0" stroke-width="2"/>`;
  h+=`<path d="M114.6 ${Y(1)}H${X(3)}M114.6 ${Y(2)}H${X(2)}" stroke="#b5b2c4" stroke-width="2"/>`;
  h+=`<path d="M114.6 539H1081" stroke="#a9a6b8" stroke-width="3"/>`;
  ['8','94.4','180.8','267.1','353.5','439.9','526.3','612.6','699'].forEach((s,i)=>h+=`<path d="M${X(i)} 539v8" stroke="#a9a6b8" stroke-width="2"/>`+txt(X(i),578,s,{size:20}));
  for(let n=0;n<4;n++)h+=txt(87,Y(n)+9,n,{size:21});
  h+=`<path d="M${V(95)} ${Y(5)}V539M${V(121.75)} ${Y(5)}V539" stroke="#47423a" stroke-width="4"/><path d="M${V(272.2)} 79V539" stroke="#7f7c8a" stroke-width="4"/>`;
  let d='';for(let v=8;v<=699;v+=8){const z=(v-121.75)/150.47;d+=(d?'L':'M')+V(v).toFixed(1)+' '+Y(11.9*Math.exp(-z*z/2)).toFixed(1);}
  h+=`<path d="${d}L1081 538.500" fill="none" stroke="#57534b" stroke-width="4"/>`;
  [['Mean : 121.75','#57534b'],['Median : 95','#57503f'],['StdDev : 150.46977','#a9a6b8'],['Normal Dist.','#8e8b9b']].forEach(([s,c],i)=>h+=`<path d="M1115 ${275+i*42.8}h17" stroke="${c}" stroke-width="3"/>`+txt(1139,284+i*42.8,s,{size:21,a:'start'}));
  h+=txt(665,39,'Distribution of DEMALOS',{size:34})+txt(603,622,'DEMALOS',{size:25});
  $('histo').innerHTML=h;
  $('histo').style.fill='#47423a';
})();

/* study area */
(function(){
  const P=([x,y])=>[x*.511+130,y*.7154+13];
  const path=a=>'M'+a.map(p=>P(p).map(n=>n.toFixed(1)).join(' ')).join('L');
  const pts=s=>s.split(' ').map(p=>p.split(',').map(Number));
  const outline=pts('1038,62 1060,75 1080,70 1115,76 1146,66 1170,73 1200,76 1217,90 1218,107 1245,115 1275,132 1303,145 1308,160 1340,178 1370,193 1395,212 1402,240 1412,257 1437,262 1450,280 1460,294 1447,305 1436,322 1432,345 1418,365 1382,380 1383,398 1388,418 1376,440 1380,465 1375,500 1377,530 1368,560 1364,598 1335,630 1328,660 1305,692 1287,722 1305,740 1287,760 1305,753 1337,770 1310,795 1288,820 1280,838 1252,860 1235,885 1222,915 1215,955 1175,957 1150,972 1128,1000 1106,1013 1120,1025 1105,1040 1075,1055 1054,1080 1050,1105 1030,1110 1015,1145 990,1172 965,1180 950,1215 920,1212 903,1245 914,1280 905,1310 893,1325 898,1360 903,1385 900,1397 860,1393 830,1408 767,1425 760,1445 740,1475 718,1500 702,1528 655,1531 620,1524 590,1518 560,1518 560,1490 577,1475 572,1440 545,1415 510,1388 505,1355 495,1330 455,1328 411,1320 418,1290 447,1258 452,1210 438,1180 448,1165 436,1125 392,1120 370,1095 368,1080 338,1068 330,1040 321,1022 352,1010 337,990 352,965 325,935 310,895 298,880 298,860 283,845 293,822 262,795 250,775 188,750 165,725 137,692 138,665 130,640 135,610 152,597 135,585 108,556 122,538 137,515 182,523 178,490 195,475 225,466 262,423 290,430 330,427 362,435 395,418 405,403 465,387 478,372 530,353 573,352 590,340 650,332 710,318 745,325 800,340 797,300 825,275 800,260 740,250 755,215 783,203 775,175 755,162 710,155 727,132 820,122 880,110 920,90 950,78 1000,75');
  const fine=[];outline.forEach((p,i)=>{const q=outline[(i+1)%outline.length];fine.push(p);const n=Math.max(1,Math.round(Math.hypot(q[0]-p[0],q[1]-p[1])/12));for(let k=1;k<n;k++)fine.push([p[0]+(q[0]-p[0])*k/n+(rnd()-.5)*6,p[1]+(q[1]-p[1])*k/n+(rnd()-.5)*5]);});
  $('edge').setAttribute('d',path(fine)+'Z');
  $('high').innerHTML=['285,30 1300,30 1240,90 1150,130 1090,230 1070,330 960,390 870,500 700,550 600,630 530,690 480,640 450,520 380,450 360,350 310,200',
   '1500,200 1420,250 1290,350 1180,400 1150,500 1110,560 1110,720 1100,850 1110,930 990,1040 900,1080 860,1160 760,1220 750,1300 720,1400 800,1480 790,1570 1330,1570 1250,1400 1240,1200 1270,1050 1310,880 1500,740',
   '200,1560 260,1470 400,1430 380,1560','1080,540 1090,520 1150,490 1150,520'].map(s=>`<path d="${path(pts(s))}Z"/>`).join('')+`<path opacity=".4" d="${path(pts('1300,1190 1360,1170 1400,1200 1330,1390 1300,1300'))}Z"/><path opacity=".55" d="${path(pts('1230,60 1420,60 1340,100 1240,110'))}Z"/>`;
  $('dark').innerHTML=['430,60 1010,55 960,110 830,150 880,230 740,270 560,250 540,170 450,110','1390,400 1480,390 1480,640 1370,640 1340,540 1270,520 1370,480'].map(s=>`<path d="${path(pts(s))}Z"/>`).join('');
  $('ridges').innerHTML=['1380,850 1385,930 1350,985 1325,1030 1296,1100 1305,1150 1335,1190 1320,1215 1288,1225 1295,1300 1345,1400 1350,1460 1372,1540','1460,820 1420,860 1405,910','1440,1180 1400,1240 1370,1300 1350,1400'].map(s=>`<path d="${path(pts(s))}"/>`).join('');
  let s='';for(let i=0;i<170;i++){const x=112+rnd()*85,y=62+rnd()*120;if(x<150||y<150&&x<195){const p=P([x,y]);s+=`<rect x="${p[0].toFixed(1)}" y="${p[1].toFixed(1)}" width="2" height="2"/>`;}}
  $('specks').innerHTML=s;
  $('stations').innerHTML=pts('205,26 255,173 213,201 168,289 330,571 795,545 1049,356 1065,387 1002,435 1273,302 1441,88 1242,442 1169,492 1065,668 1049,765 706,730 1072,871 568,916 753,1082 719,1346 413,1284 142,1118 100,871 566,1563').map(p=>{const q=P(p);return `<circle cx="${q[0].toFixed(1)}" cy="${q[1].toFixed(1)}" r="11.300"/>`;}).join('');
})();
</script>
</body>
</html>
